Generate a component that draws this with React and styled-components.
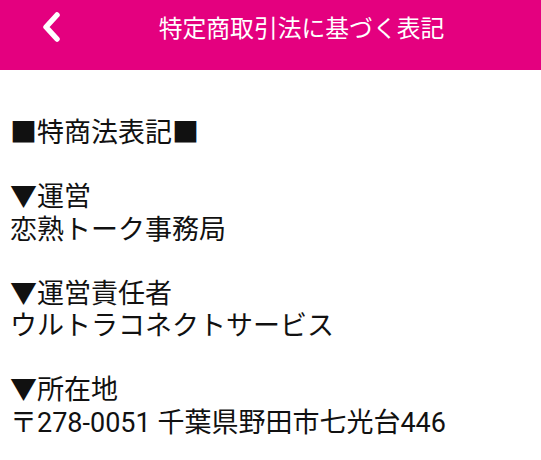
import * as React from 'react';
import styled, { createGlobalStyle } from 'styled-components';

const GlobalStyle = createGlobalStyle`
  html, body {
    margin: 0;
    padding: 0;
    background: #ffffff;
  }
  body {
    font-family: Roboto, "Noto Sans CJK JP", sans-serif;
  }
`;

const Header = styled.header`
  position: relative;
  height: 70px;
  background-color: #e4007f;
  display: flex;
  justify-content: center;
  padding-top: 10px;
  box-sizing: border-box;
`;

const BackButton = styled.button`
  position: absolute;
  left: 36px;
  top: 10px;
  width: 32px;
  height: 34px;
  padding: 0;
  border: 0;
  background: none;
  display: flex;
  align-items: center;
  justify-content: center;
`;

const Title = styled.h1`
  margin: 0 0 0 62px;
  font-size: 23.8px;
  font-weight: 400;
  line-height: 34px;
  color: #ffffff;
  font-family: "Noto Sans CJK JP", sans-serif;
`;

const Content = styled.main`
  padding: 47px 10px 0 10px;
  color: #111111;
`;

const Block = styled.section`
  margin-bottom: 32px;
`;

const Line = styled.p`
  margin: 0;
  font-size: 27px;
  line-height: 32.3px;
  white-space: nowrap;
`;

const Chevron = () => (
  <svg width="22" height="30" viewBox="0 0 22 30">
    <path d="M16 3 L5 15 L16 27" fill="none" stroke="#ffffff" strokeWidth="5.5" strokeLinecap="round" strokeLinejoin="round"/>
  </svg>
);

const sections = [
  ['■特商法表記■'],
  ['▼運営', '恋熟トーク事務局'],
  ['▼運営責任者', 'ウルトラコネクトサービス'],
  ['▼所在地', '〒278-0051 千葉県野田市七光台446'],
];

export default function App() {
  return (
    <>
      <GlobalStyle/>
      <Header>
        <BackButton aria-label="戻る"><Chevron/></BackButton>
        <Title>特定商取引法に基づく表記</Title>
      </Header>
      <Content>
        {sections.map((lines, i) => (
          <Block key={i}>
            {lines.map((l) => <Line key={l}>{l}</Line>)}
          </Block>
        ))}
      </Content>
    </>
  );
}
